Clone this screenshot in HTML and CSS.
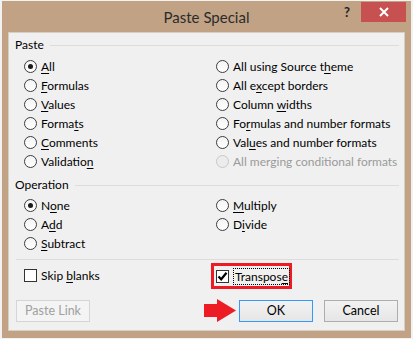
FILE: index.html
```html
<!DOCTYPE html>
<html lang="en">
<head>
  <meta charset="UTF-8" />
  <title>Paste Special</title>
  <link rel="stylesheet" href="styles.css">
</head>
<body>
  <div class="window">
    <div class="titlebar">
      <span></span>
      <h1 class="title">Paste Special</h1>
      <div class="controls">
        <span class="help">?</span>
        <span class="close">
          <svg width="10" height="10" viewBox="0 0 10 10"><path d="M1 1 L9 9 M9 1 L1 9" stroke="#fff" stroke-width="2"/></svg>
        </span>
      </div>
    </div>

    <div class="client">
      <div class="group-head paste-head"><span>Paste</span><i class="rule"></i></div>
      <div class="options paste-opts">
        <label class="opt"><span class="radio on"></span><span><u>A</u>ll</span></label>
        <label class="opt"><span class="radio"></span><span>All using Source t<u>h</u>eme</span></label>
        <label class="opt"><span class="radio"></span><span><u>F</u>ormulas</span></label>
        <label class="opt"><span class="radio"></span><span>All e<u>x</u>cept borders</span></label>
        <label class="opt"><span class="radio"></span><span><u>V</u>alues</span></label>
        <label class="opt"><span class="radio"></span><span>Column <u>w</u>idths</span></label>
        <label class="opt"><span class="radio"></span><span>Forma<u>t</u>s</span></label>
        <label class="opt"><span class="radio"></span><span>Fo<u>r</u>mulas and number formats</span></label>
        <label class="opt"><span class="radio"></span><span><u>C</u>omments</span></label>
        <label class="opt"><span class="radio"></span><span>Val<u>u</u>es and number formats</span></label>
        <label class="opt"><span class="radio"></span><span>Validatio<u>n</u></span></label>
        <label class="opt disabled"><span class="radio"></span><span>All merging conditional formats</span></label>
      </div>

      <div class="group-head op-head"><span>Operation</span><i class="rule"></i></div>
      <div class="options op-opts">
        <label class="opt"><span class="radio on"></span><span>N<u>o</u>ne</span></label>
        <label class="opt"><span class="radio"></span><span><u>M</u>ultiply</span></label>
        <label class="opt"><span class="radio"></span><span>A<u>d</u>d</span></label>
        <label class="opt"><span class="radio"></span><span>D<u>i</u>vide</span></label>
        <label class="opt"><span class="radio"></span><span><u>S</u>ubtract</span></label>
        <span></span>
      </div>

      <i class="sep"></i>

      <div class="options checks">
        <label class="opt"><span class="check"></span><span>Skip <u>b</u>lanks</span></label>
        <div class="highlight">
          <label class="opt">
            <span class="check">
              <svg width="11" height="11" viewBox="0 0 11 11"><path d="M1.5 5.5 L4.2 8.3 L9.5 1.8" fill="none" stroke="#000" stroke-width="2.2"/></svg>
            </span>
            <span class="focus">Transpos<u>e</u></span>
          </label>
        </div>
      </div>

      <div class="buttons">
        <button class="btn off">Paste Link</button>
        <svg class="arrow" width="32" height="23" viewBox="0 0 32 23"><polygon points="0,5 13,5 13,0 32,11.5 13,23 13,18 0,18" fill="#ed1c24"/></svg>
        <button class="btn ok">OK</button>
        <button class="btn">Cancel</button>
      </div>
    </div>
  </div>
</body>
</html>
```

FILE: styles.css
```css
* {
  box-sizing: border-box;
}

body {
  margin: 0;
  background: #f2f2f2;
  font-family: Lato, "Noto Sans", sans-serif;
  font-size: 12px;
  color: #000;
}

.window {
  margin: 1px 0 0 2px;
  width: 409px;
  height: 337px;
  background: #c1a285;
  padding: 0 6px 7px 6px;
  display: flex;
  flex-direction: column;
}

.titlebar {
  height: 31px;
  display: grid;
  grid-template-columns: 1fr auto 1fr;
  align-items: start;
  margin: 0 -6px;
}

.title {
  margin: 6px 0 0;
  font-size: 15px;
  font-weight: normal;
  color: #2b2b2b;
  line-height: 20px;
}

.controls {
  display: flex;
  justify-content: flex-end;
  align-items: flex-start;
  padding-right: 5px;
}

.help {
  font-weight: bold;
  font-size: 13px;
  color: #222;
  margin: 4px 11px 0 0;
  line-height: 14px;
}

.close {
  width: 45px;
  height: 20px;
  margin-top: 1px;
  background: #c75050;
  display: flex;
  align-items: center;
  justify-content: center;
}

.client {
  flex: 1;
  background: #f0f0f0;
  border: 1px solid #d8cfc4;
  padding: 0 5px 0 6px;
  display: flex;
  flex-direction: column;
}

.group-head {
  display: flex;
  align-items: center;
  height: 14px;
  line-height: 14px;
}

.group-head .rule {
  flex: 1;
  height: 1px;
  background: #dcdcdc;
  margin-left: 6px;
}

.paste-head {
  margin-top: 5px;
}

.op-head {
  margin-top: 7px;
}

.options {
  display: grid;
  grid-template-columns: 192px 1fr;
  padding-left: 9px;
}

.paste-opts {
  margin-top: 5px;
}

.op-opts {
  margin-top: 4px;
}

.opt {
  height: 19px;
  display: flex;
  align-items: center;
  gap: 4px;
  white-space: nowrap;
}

.opt u {
  text-underline-offset: 2px;
}

.radio {
  width: 13px;
  height: 13px;
  border-radius: 50%;
  border: 1px solid #3c3c3c;
  background: linear-gradient(#f4f4f4, #fff);
  display: flex;
  align-items: center;
  justify-content: center;
  flex: none;
}

.radio.on::after {
  content: "";
  width: 5px;
  height: 5px;
  border-radius: 50%;
  background: #1a1a1a;
}

.disabled {
  color: #9a9a9a;
}

.disabled .radio {
  border-color: #c8c8c8;
  background: #ececec;
}

.sep {
  height: 1px;
  background: #dcdcdc;
  margin: 6px 0 0 1px;
}

.checks {
  margin-top: 6px;
}

.check {
  width: 13px;
  height: 13px;
  border: 1px solid #333;
  background: #fff;
  display: flex;
  align-items: center;
  justify-content: center;
  flex: none;
}

.highlight {
  margin-left: -5px;
  width: 81px;
  height: 26px;
  margin-top: -3px;
  border: 3px solid #ed1c24;
  padding-left: 2px;
  display: flex;
  align-items: center;
}

.focus {
  border: 1px dotted #000;
  padding: 0 1px;
  line-height: 15px;
}

.buttons {
  display: flex;
  align-items: center;
  margin-top: 10px;
  padding-right: 1px;
}

.btn {
  height: 22px;
  width: 74px;
  font-family: inherit;
  font-size: 12.5px;
  color: #000;
  border: 1px solid #adadad;
  background: linear-gradient(#f2f2f2, #e6e6e6);
  padding: 0;
}

.btn.off {
  color: #a0a0a0;
  border-color: #d5d5d5;
  background: #f4f4f4;
  margin-left: 1px;
}

.btn.ok {
  border-color: #3399ff;
  margin-right: 11px;
}

.arrow {
  margin-left: auto;
  margin-right: 3px;
}
```
